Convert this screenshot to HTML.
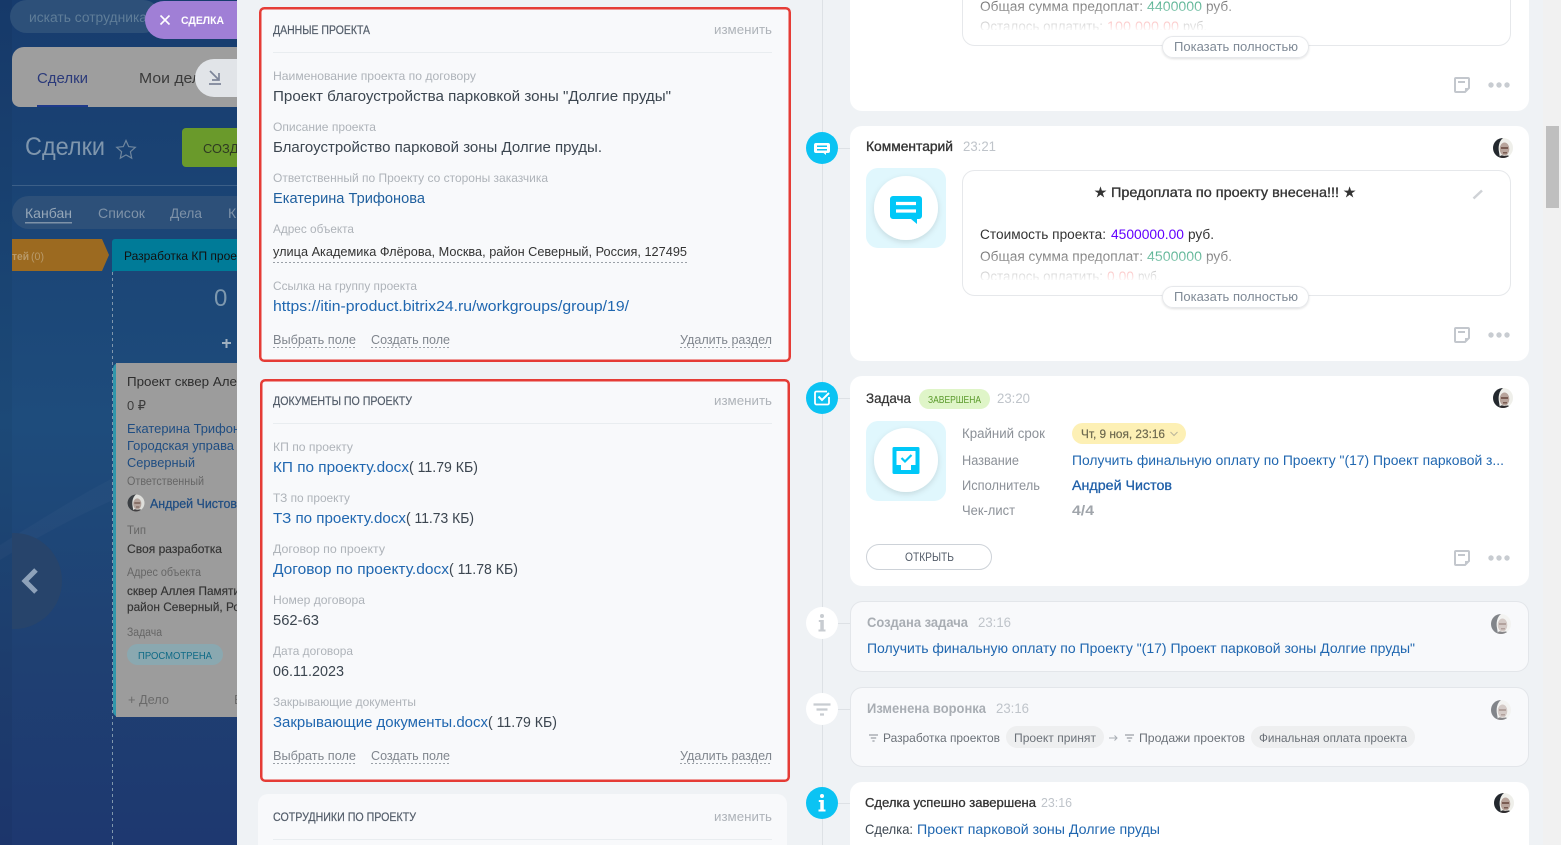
<!DOCTYPE html>
<html lang="ru"><head><meta charset="utf-8"><title>Сделки</title>
<style>
html,body{margin:0;padding:0;width:1561px;height:845px;overflow:hidden;background:#eff2f5}
svg{display:block;position:absolute;left:0;top:0}
text{font-family:"Liberation Sans","DejaVu Sans",sans-serif;white-space:pre;font-size:14px;fill:#3c4650}
.l{font-size:12px;fill:#aeb3b9}
.v{font-size:14.5px;fill:#3c4650}
.a{font-size:14.5px;fill:#2067b0}
.ad{font-size:13px;fill:#333}
.h{font-size:11.5px;fill:#525c69;stroke:#525c69;stroke-width:.2}
.e{font-size:12.5px;fill:#aeb3b9}
.d{font-size:12.5px;fill:#80868e}
.t{font-size:14px;fill:#333;stroke:#333;stroke-width:.35}
.tm{font-size:14px;fill:#bfc4ca}
.g{font-size:13.5px;fill:#8c9198}
.bd{font-size:13.5px;fill:#a8adb3;font-weight:bold}
.c{font-size:13px;fill:#2d2d2d}
.cl{font-size:11.5px;fill:#666}
.cb{font-size:13px;fill:#1f4d82}
.btn{font-size:12.5px;fill:#7f8a96}
</style></head><body>
<svg width="1561" height="845" viewBox="0 0 1561 845" xmlns="http://www.w3.org/2000/svg">
<defs>
<linearGradient id="bg" x1="0" y1="0" x2="0" y2="1"><stop offset="0" stop-color="#173c6e"/><stop offset=".5" stop-color="#1e4c7c"/><stop offset=".78" stop-color="#1f4072"/><stop offset="1" stop-color="#1e3870"/></linearGradient>
<linearGradient id="fB" x1="0" y1="0" x2="0" y2="1"><stop offset="0" stop-color="#fff" stop-opacity="0"/><stop offset="1" stop-color="#fff" stop-opacity="1"/></linearGradient>
<filter id="sh" x="-30%" y="-30%" width="160%" height="160%"><feDropShadow dx="0" dy="2" stdDeviation="3" flood-color="#000" flood-opacity=".12"/></filter>
<filter id="sb" x="-10%" y="-30%" width="120%" height="170%"><feDropShadow dx="0" dy="1" stdDeviation="1" flood-color="#000" flood-opacity=".12"/></filter>
<clipPath id="av"><circle cx="0" cy="0" r="10"/></clipPath>
<clipPath id="cleft"><rect x="12" y="500" width="80" height="160"/></clipPath>
<clipPath id="boxA"><rect x="963" y="0" width="547" height="30"/></clipPath>
<clipPath id="boxB"><rect x="963" y="171" width="547" height="109"/></clipPath>
<g id="avatar" clip-path="url(#av)">
<rect x="-10" y="-10" width="20" height="20" fill="#efefea"/>
<path d="M-10-10H0C-4-7-5-1-4 4L-3 10H-10Z" fill="#23282e"/>
<ellipse cx="1.500" cy="1" rx="4.800" ry="6.500" fill="#b8a49b"/>
<path d="M-4 10C-3 7 -1 7 1 8C3 8 6 6 7 10Z" fill="#2c2a2c"/>
<path d="M-2 -1H5V1H-2ZM0 4H4V5.500H0Z" fill="#7a5c52"/>
</g>
<g id="note">
<path d="M-6-7H6A1 1 0 0 1 7-6V3L3 7H-6A1 1 0 0 1-7 6V-6A1 1 0 0 1-6-7Z" fill="none" stroke="#c3c7cd" stroke-width="2"/>
<path d="M-4-3H3" stroke="#c3c7cd" stroke-width="2"/>
<path d="M7 3H3V7" fill="#c3c7cd"/>
<circle cx="29" cy="0" r="2.700" fill="#c8ccd1"/><circle cx="37" cy="0" r="2.700" fill="#c8ccd1"/><circle cx="45" cy="0" r="2.700" fill="#c8ccd1"/>
</g>
<g id="filt"><path d="M0 0H9M1.800 3H7.200M3.400 6H5.600" stroke="#9aa0a7" stroke-width="1.300" fill="none"/></g>
</defs>

<!-- left background -->
<rect x="0" y="0" width="238" height="845" fill="url(#bg)"/>
<rect x="0" y="0" width="12" height="845" fill="#000" opacity=".04"/>
<path d="M0 545C40 520 80 495 113 478V500C80 515 40 535 0 560Z" fill="#fff" opacity=".025"/>
<circle cx="14" cy="581" r="48" fill="#27446b" clip-path="url(#cleft)"/>
<path d="M36 570L25 581L36 592" fill="none" stroke="#8ea2ba" stroke-width="5"/>

<rect x="10" y="0" width="150" height="33" rx="16.500" fill="#2d5079"/>
<text x="29" y="22" style="font-size:13.500px;fill:#5f7d98" textLength="118" lengthAdjust="spacingAndGlyphs">искать сотрудника</text>
<path d="M157 1H238V39H164A19 19 0 0 1 145 20A19 19 0 0 1 164 1Z" fill="#a07fd6"/>
<path d="M160.500 15.500L169.500 24.500M169.500 15.500L160.500 24.500" stroke="#fff" stroke-width="1.600"/>
<text x="181" y="24" style="font-size:11px;font-weight:bold;fill:#fff" textLength="43" lengthAdjust="spacingAndGlyphs">СДЕЛКА</text>

<path d="M24 47H238V107H20A8 8 0 0 1 12 99V59A12 12 0 0 1 24 47Z" fill="#9e9e9e"/>
<text x="37" y="83" style="font-size:15px;fill:#2b3a7a" textLength="51" lengthAdjust="spacingAndGlyphs">Сделки</text>
<rect x="37" y="105" width="51" height="2" fill="#1f3a8a"/>
<text x="139" y="83" style="font-size:15px;fill:#3a3a3a" textLength="62" lengthAdjust="spacingAndGlyphs">Мои дел</text>
<path d="M214 59H238V97H214A19 19 0 0 1 214 59Z" fill="#e1e4e8"/>
<path d="M210 71L219 80M219 73V80H212M209 84H221" fill="none" stroke="#7d8599" stroke-width="1.700"/>

<text x="25" y="155" style="font-size:25px;fill:#7f96ad" textLength="80" lengthAdjust="spacingAndGlyphs">Сделки</text>
<path d="M126 140.500L128.700 146.600L135.300 147.300L130.400 151.700L131.700 158.200L126 154.900L120.300 158.200L121.600 151.700L116.700 147.300L123.300 146.600Z" fill="none" stroke="#6f869e" stroke-width="1.200"/>
<rect x="182" y="128" width="70" height="39" rx="4" fill="#6a9a2b"/>
<text x="203" y="153" style="font-size:13px;fill:#2f3a22" textLength="44" lengthAdjust="spacingAndGlyphs">СОЗДА</text>
<rect x="12" y="185" width="226" height="1" fill="#3c5f87"/>
<rect x="12" y="196" width="260" height="33" rx="16.500" fill="#2d5079"/>
<text x="25" y="218" style="font-size:14px;fill:#96a7b8" textLength="47" lengthAdjust="spacingAndGlyphs">Канбан</text>
<rect x="25" y="222" width="47" height="1.500" fill="#7e92a8"/>
<text x="98" y="218" style="font-size:14px;fill:#7e92a8" textLength="47" lengthAdjust="spacingAndGlyphs">Список</text>
<text x="170" y="218" style="font-size:14px;fill:#7e92a8" textLength="32" lengthAdjust="spacingAndGlyphs">Дела</text>
<text x="228" y="218" style="font-size:14px;fill:#7e92a8">К</text>

<path d="M12 239H102L109 255L102 271H12Z" fill="#9c6a20"/>
<text x="12" y="260" style="font-size:11px;font-weight:bold;fill:#b89a6a" textLength="17" lengthAdjust="spacingAndGlyphs">тей</text>
<text x="31" y="260" style="font-size:11px;fill:#b89a6a" textLength="13" lengthAdjust="spacingAndGlyphs">(0)</text>
<path d="M112 242A3 3 0 0 1 115 239H245V271H115A3 3 0 0 0 112 274Z" fill="#007b98"/>
<text x="124" y="260" style="font-size:12px;fill:#111" textLength="113" lengthAdjust="spacingAndGlyphs">Разработка КП прое</text>
<path d="M112.500 272V845" stroke="#7f97ad" stroke-width="1" stroke-dasharray="3 3"/>
<text x="214" y="306" style="font-size:24px;fill:#7d98ae">0</text>
<path d="M222 343H231M226.500 339V348" stroke="#9fb0c0" stroke-width="2"/>

<rect x="113" y="363" width="140" height="354" rx="6" fill="#2f96ab"/>
<path d="M116 363H253V717H116Z" fill="#9c9c9c"/>
<text x="127" y="386" class="c" textLength="110" lengthAdjust="spacingAndGlyphs">Проект сквер Але</text>
<text x="127" y="410" style="font-size:13px;fill:#3d3d3d" textLength="19" lengthAdjust="spacingAndGlyphs">0 ₽</text>
<text x="127" y="433" class="cb" textLength="113" lengthAdjust="spacingAndGlyphs">Екатерина Трифон</text>
<text x="127" y="450" class="cb" textLength="107" lengthAdjust="spacingAndGlyphs">Городская управа</text>
<text x="127" y="467" class="cb" textLength="68" lengthAdjust="spacingAndGlyphs">Серверный</text>
<text x="127" y="485" class="cl" textLength="77" lengthAdjust="spacingAndGlyphs">Ответственный</text>
<use href="#avatar" transform="translate(136,503) scale(.85)" opacity=".8"/>
<text x="150" y="508" style="font-size:12.500px;fill:#1f4d82;stroke:#1f4d82;stroke-width:.25" textLength="87" lengthAdjust="spacingAndGlyphs">Андрей Чистов</text>
<text x="127" y="534" class="cl" textLength="19" lengthAdjust="spacingAndGlyphs">Тип</text>
<text x="127" y="553" style="font-size:12px;fill:#333;stroke:#333;stroke-width:.15" textLength="95" lengthAdjust="spacingAndGlyphs">Своя разработка</text>
<text x="127" y="576" class="cl" textLength="74" lengthAdjust="spacingAndGlyphs">Адрес объекта</text>
<text x="127" y="595" style="font-size:12px;fill:#333;stroke:#333;stroke-width:.15" textLength="113" lengthAdjust="spacingAndGlyphs">сквер Аллея Памяти</text>
<text x="127" y="611" style="font-size:12px;fill:#333;stroke:#333;stroke-width:.15" textLength="113" lengthAdjust="spacingAndGlyphs">район Северный, Ро</text>
<text x="127" y="636" class="cl" textLength="35" lengthAdjust="spacingAndGlyphs">Задача</text>
<rect x="127" y="644" width="96" height="21" rx="10.500" fill="#8aa8b0"/>
<text x="138" y="659" style="font-size:10.500px;fill:#0f6a86" textLength="74" lengthAdjust="spacingAndGlyphs">ПРОСМОТРЕНА</text>
<text x="128" y="704" style="font-size:13px;fill:#6a6a6a" textLength="41" lengthAdjust="spacingAndGlyphs">+ Дело</text>
<text x="234" y="704" style="font-size:13px;fill:#6a6a6a">В</text>

<!-- slider bg -->
<rect x="237" y="0" width="1306" height="845" fill="#eff2f5"/>
<rect x="1543" y="0" width="18" height="845" fill="#f1f1f1"/>
<rect x="1546" y="126" width="13" height="82" fill="#bfbfbf"/>

<!-- card 1 -->
<rect x="260.250" y="8.250" width="529.500" height="352.500" rx="4" fill="#f8f9fb" stroke="#e53c36" stroke-width="2.500"/>
<text x="273" y="34" class="h" textLength="97" lengthAdjust="spacingAndGlyphs">ДАННЫЕ ПРОЕКТА</text>
<text x="714" y="34" class="e" textLength="58" lengthAdjust="spacingAndGlyphs">изменить</text>
<rect x="273" y="52" width="499" height="1" fill="#e9edf0"/>
<text x="273" y="80" class="l" textLength="203" lengthAdjust="spacingAndGlyphs">Наименование проекта по договору</text>
<text x="273" y="101" class="v" textLength="398" lengthAdjust="spacingAndGlyphs">Проект благоустройства парковкой зоны "Долгие пруды"</text>
<text x="273" y="131" class="l" textLength="103" lengthAdjust="spacingAndGlyphs">Описание проекта</text>
<text x="273" y="152" class="v" textLength="329" lengthAdjust="spacingAndGlyphs">Благоустройство парковой зоны Долгие пруды.</text>
<text x="273" y="182" class="l" textLength="275" lengthAdjust="spacingAndGlyphs">Ответственный по Проекту со стороны заказчика</text>
<text x="273" y="203" class="a" style="fill:#1f5f9e" textLength="152" lengthAdjust="spacingAndGlyphs">Екатерина Трифонова</text>
<text x="273" y="233" class="l" textLength="81" lengthAdjust="spacingAndGlyphs">Адрес объекта</text>
<text x="273" y="256" class="ad" textLength="414" lengthAdjust="spacingAndGlyphs">улица Академика Флёрова, Москва, район Северный, Россия, 127495</text>
<path d="M273 262.500H687" stroke="#9aa0a7" stroke-dasharray="2 2"/>
<text x="273" y="290" class="l" textLength="144" lengthAdjust="spacingAndGlyphs">Ссылка на группу проекта</text>
<text x="273" y="311" class="a" textLength="356" lengthAdjust="spacingAndGlyphs">https://itin-product.bitrix24.ru/workgroups/group/19/</text>
<text x="273" y="344" class="d" textLength="83" lengthAdjust="spacingAndGlyphs">Выбрать поле</text>
<text x="371" y="344" class="d" textLength="79" lengthAdjust="spacingAndGlyphs">Создать поле</text>
<text x="680" y="344" class="d" textLength="92" lengthAdjust="spacingAndGlyphs">Удалить раздел</text>
<path d="M273 347.500H356M371 347.500H450M680 347.500H772" stroke="#9aa0a7" stroke-dasharray="2 2"/>

<!-- card 2 -->
<rect x="261.250" y="380.250" width="527.500" height="400.500" rx="4" fill="#f8f9fb" stroke="#e53c36" stroke-width="2.500"/>
<text x="273" y="405" class="h" textLength="139" lengthAdjust="spacingAndGlyphs">ДОКУМЕНТЫ ПО ПРОЕКТУ</text>
<text x="714" y="405" class="e" textLength="58" lengthAdjust="spacingAndGlyphs">изменить</text>
<rect x="273" y="423" width="499" height="1" fill="#e9edf0"/>
<text x="273" y="451" class="l" textLength="80" lengthAdjust="spacingAndGlyphs">КП по проекту</text>
<text x="273" y="472" class="a" textLength="136" lengthAdjust="spacingAndGlyphs">КП по проекту.docx</text>
<text x="409" y="472" class="v" textLength="69" lengthAdjust="spacingAndGlyphs">( 11.79 КБ)</text>
<text x="273" y="502" class="l" textLength="77" lengthAdjust="spacingAndGlyphs">ТЗ по проекту</text>
<text x="273" y="523" class="a" textLength="133" lengthAdjust="spacingAndGlyphs">ТЗ по проекту.docx</text>
<text x="406" y="523" class="v" textLength="68" lengthAdjust="spacingAndGlyphs">( 11.73 КБ)</text>
<text x="273" y="553" class="l" textLength="112" lengthAdjust="spacingAndGlyphs">Договор по проекту</text>
<text x="273" y="574" class="a" textLength="176" lengthAdjust="spacingAndGlyphs">Договор по проекту.docx</text>
<text x="449" y="574" class="v" textLength="69" lengthAdjust="spacingAndGlyphs">( 11.78 КБ)</text>
<text x="273" y="604" class="l" textLength="92" lengthAdjust="spacingAndGlyphs">Номер договора</text>
<text x="273" y="625" class="v" textLength="46" lengthAdjust="spacingAndGlyphs">562-63</text>
<text x="273" y="655" class="l" textLength="80" lengthAdjust="spacingAndGlyphs">Дата договора</text>
<text x="273" y="676" class="v" textLength="71" lengthAdjust="spacingAndGlyphs">06.11.2023</text>
<text x="273" y="706" class="l" textLength="143" lengthAdjust="spacingAndGlyphs">Закрывающие документы</text>
<text x="273" y="727" class="a" textLength="215" lengthAdjust="spacingAndGlyphs">Закрывающие документы.docx</text>
<text x="488" y="727" class="v" textLength="69" lengthAdjust="spacingAndGlyphs">( 11.79 КБ)</text>
<text x="273" y="760" class="d" textLength="83" lengthAdjust="spacingAndGlyphs">Выбрать поле</text>
<text x="371" y="760" class="d" textLength="79" lengthAdjust="spacingAndGlyphs">Создать поле</text>
<text x="680" y="760" class="d" textLength="92" lengthAdjust="spacingAndGlyphs">Удалить раздел</text>
<path d="M273 763.500H356M371 763.500H450M680 763.500H772" stroke="#9aa0a7" stroke-dasharray="2 2"/>

<!-- card 3 -->
<rect x="258" y="794" width="529" height="70" rx="10" fill="#f8f9fb"/>
<text x="273" y="821" class="h" textLength="143" lengthAdjust="spacingAndGlyphs">СОТРУДНИКИ ПО ПРОЕКТУ</text>
<text x="714" y="821" class="e" textLength="58" lengthAdjust="spacingAndGlyphs">изменить</text>
<rect x="273" y="839" width="499" height="1" fill="#e9edf0"/>

<!-- timeline -->
<rect x="822" y="0" width="1" height="845" fill="#dde1e5"/>
<path d="M838 148.500H850M838 398.500H850M838 623.500H850M838 709.500H850M838 803.500H850" stroke="#dde1e5"/>

<!-- card A -->
<path d="M850-20H1529V99A12 12 0 0 1 1517 111H862A12 12 0 0 1 850 99Z" fill="#fff"/>
<rect x="962.500" y="-30" width="548" height="75.500" rx="12" fill="#fff" stroke="#e6e8eb"/>
<g clip-path="url(#boxA)">
<text x="980" y="11" class="g" style="fill:#333" textLength="163" lengthAdjust="spacingAndGlyphs">Общая сумма предоплат:</text>
<text x="1147" y="11" class="g" style="fill:#0a8f60" textLength="55" lengthAdjust="spacingAndGlyphs">4400000</text>
<text x="1206" y="11" class="g" style="fill:#333" textLength="26" lengthAdjust="spacingAndGlyphs">руб.</text>
<text x="980" y="31" class="g" style="fill:#333" textLength="123" lengthAdjust="spacingAndGlyphs">Осталось оплатить:</text>
<text x="1107" y="31" class="g" style="fill:#f01010" textLength="72" lengthAdjust="spacingAndGlyphs">100 000.00</text>
<text x="1183" y="31" class="g" style="fill:#333" textLength="24" lengthAdjust="spacingAndGlyphs">руб.</text>
<rect x="963" y="-12" width="547" height="44" fill="url(#fB)"/>
</g>
<rect x="1162.500" y="36.500" width="146" height="21" rx="10.500" fill="#fff" stroke="#e6e8eb" filter="url(#sb)"/>
<text x="1174" y="51" class="btn" textLength="124" lengthAdjust="spacingAndGlyphs">Показать полностью</text>
<use href="#note" x="1462" y="85"/>

<!-- card B -->
<rect x="850" y="126" width="679" height="235" rx="12" fill="#fff"/>
<circle cx="822" cy="148" r="16" fill="#0bc3f3"/>
<path d="M816 143H828A2 2 0 0 1 830 145V151A2 2 0 0 1 828 153H826V155L823.500 153H816A2 2 0 0 1 814 151V145A2 2 0 0 1 816 143Z" fill="#fff"/>
<path d="M817 146.300H827M817 149.800H827" stroke="#0bc3f3" stroke-width="1.500"/>
<text x="866" y="151" class="t" textLength="87" lengthAdjust="spacingAndGlyphs">Комментарий</text>
<text x="963" y="151" class="tm" textLength="33" lengthAdjust="spacingAndGlyphs">23:21</text>
<use href="#avatar" x="1503" y="148"/>
<rect x="866" y="168" width="80" height="80" rx="12" fill="#e0f7fd"/>
<circle cx="906" cy="208" r="32" fill="#fff" filter="url(#sh)"/>
<path d="M893 196H919A3 3 0 0 1 922 199V216A3 3 0 0 1 919 219H917V224L911 219H893A3 3 0 0 1 890 216V199A3 3 0 0 1 893 196Z" fill="#00c8f8"/>
<path d="M896 203.500H916M896 211H916" stroke="#fff" stroke-width="3.200"/>
<rect x="962.500" y="170.500" width="548" height="125" rx="12" fill="#fff" stroke="#e6e8eb"/>
<text x="1094" y="197" style="font-size:14px;fill:#333;stroke:#333;stroke-width:.3" textLength="262" lengthAdjust="spacingAndGlyphs">★ Предоплата по проекту внесена!!! ★</text>
<path d="M1473.500 198.500L1482 190.500" stroke="#cfd2d6" stroke-width="2.500"/>
<g clip-path="url(#boxB)">
<text x="980" y="239" class="g" style="fill:#333" textLength="126" lengthAdjust="spacingAndGlyphs">Стоимость проекта:</text>
<text x="1111" y="239" class="g" style="fill:#6200ff" textLength="73" lengthAdjust="spacingAndGlyphs">4500000.00</text>
<text x="1188" y="239" class="g" style="fill:#333" textLength="26" lengthAdjust="spacingAndGlyphs">руб.</text>
<text x="980" y="261" class="g" style="fill:#333" textLength="163" lengthAdjust="spacingAndGlyphs">Общая сумма предоплат:</text>
<text x="1147" y="261" class="g" style="fill:#0a8f60" textLength="55" lengthAdjust="spacingAndGlyphs">4500000</text>
<text x="1206" y="261" class="g" style="fill:#333" textLength="26" lengthAdjust="spacingAndGlyphs">руб.</text>
<text x="980" y="281" class="g" style="fill:#333" textLength="123" lengthAdjust="spacingAndGlyphs">Осталось оплатить:</text>
<text x="1107" y="281" class="g" style="fill:#f01010" textLength="27" lengthAdjust="spacingAndGlyphs">0.00</text>
<text x="1138" y="281" class="g" style="fill:#333" textLength="22" lengthAdjust="spacingAndGlyphs">руб.</text>
<rect x="963" y="238" width="547" height="44" fill="url(#fB)"/>
</g>
<rect x="1162.500" y="286.500" width="146" height="21" rx="10.500" fill="#fff" stroke="#e6e8eb" filter="url(#sb)"/>
<text x="1174" y="301" class="btn" textLength="124" lengthAdjust="spacingAndGlyphs">Показать полностью</text>
<use href="#note" x="1462" y="335"/>

<!-- card C -->
<rect x="850" y="376" width="679" height="210" rx="12" fill="#fff"/>
<circle cx="822" cy="398" r="16" fill="#0bc3f3"/>
<path d="M827 391.500H816.500A1.500 1.500 0 0 0 815 393V403A1.500 1.500 0 0 0 816.500 404.500H827.500A1.500 1.500 0 0 0 829 403V397" fill="none" stroke="#fff" stroke-width="1.800"/>
<path d="M818.500 396.500L822 400L829 393" fill="none" stroke="#fff" stroke-width="2"/>
<text x="866" y="403" class="t" style="stroke-width:.2" textLength="45" lengthAdjust="spacingAndGlyphs">Задача</text>
<rect x="919" y="389" width="71" height="20" rx="10" fill="#dff5c8"/>
<text x="928" y="403" style="font-size:10.500px;fill:#5a9a2b" textLength="53" lengthAdjust="spacingAndGlyphs">ЗАВЕРШЕНА</text>
<text x="997" y="403" class="tm" textLength="33" lengthAdjust="spacingAndGlyphs">23:20</text>
<use href="#avatar" x="1503" y="398"/>
<rect x="866" y="421" width="80" height="80" rx="12" fill="#e0f7fd"/>
<circle cx="906" cy="460" r="32" fill="#fff" filter="url(#sh)"/>
<rect x="892.500" y="447" width="27" height="27" rx="1.500" fill="#00c8f8"/>
<path d="M896.500 451H915.500V465H911V470H901V465H896.500Z" fill="#fff"/>
<path d="M901.500 458L905 461.500L911.500 455" fill="none" stroke="#00c8f8" stroke-width="2.200"/>
<text x="962" y="438" class="g" textLength="83" lengthAdjust="spacingAndGlyphs">Крайний срок</text>
<rect x="1072" y="423" width="114" height="21" rx="10.500" fill="#fdf0b5"/>
<text x="1081" y="438" style="font-size:12px;fill:#6e6a50;stroke:#6e6a50;stroke-width:.2" textLength="84" lengthAdjust="spacingAndGlyphs">Чт, 9 ноя, 23:16</text>
<path d="M1170.500 432L1174 435.500L1177.500 432" fill="none" stroke="#b8b49a"/>
<text x="962" y="465" class="g" textLength="57" lengthAdjust="spacingAndGlyphs">Название</text>
<text x="1072" y="465" style="font-size:13.500px;fill:#2067b0" textLength="432" lengthAdjust="spacingAndGlyphs">Получить финальную оплату по Проекту "(17) Проект парковой з...</text>
<text x="962" y="490" class="g" textLength="78" lengthAdjust="spacingAndGlyphs">Исполнитель</text>
<text x="1072" y="490" style="font-size:13.500px;fill:#1f5fa8;stroke:#1f5fa8;stroke-width:.3" textLength="100" lengthAdjust="spacingAndGlyphs">Андрей Чистов</text>
<text x="962" y="515" class="g" textLength="53" lengthAdjust="spacingAndGlyphs">Чек-лист</text>
<text x="1072" y="515" style="font-size:13.500px;font-weight:bold;fill:#a0a5ab" textLength="22" lengthAdjust="spacingAndGlyphs">4/4</text>
<rect x="866.500" y="544.500" width="125" height="25" rx="12.500" fill="#fff" stroke="#cdd2d8"/>
<text x="905" y="561" style="font-size:11.500px;fill:#535c69" textLength="49" lengthAdjust="spacingAndGlyphs">ОТКРЫТЬ</text>
<use href="#note" x="1462" y="558"/>

<!-- card D -->
<rect x="850.500" y="601.500" width="678" height="70" rx="12" fill="#f8f9fb" stroke="#e3e6ea"/>
<circle cx="822" cy="623" r="16" fill="#fff"/>
<path d="M818.800 620H823.800V629.500H825.500V631.500H818.500V629.500H820.300V622H818.800Z" fill="#c8ccd1"/>
<circle cx="822" cy="616" r="2" fill="#c8ccd1"/>
<text x="867" y="627" class="bd" textLength="101" lengthAdjust="spacingAndGlyphs">Создана задача</text>
<text x="978" y="627" class="tm" textLength="33" lengthAdjust="spacingAndGlyphs">23:16</text>
<use href="#avatar" x="1501" y="624" opacity=".55"/>
<text x="867" y="653" style="font-size:14px;fill:#2067b0" textLength="548" lengthAdjust="spacingAndGlyphs">Получить финальную оплату по Проекту "(17) Проект парковой зоны Долгие пруды"</text>

<!-- card E -->
<rect x="850.500" y="687.500" width="678" height="79" rx="12" fill="#f8f9fb" stroke="#e3e6ea"/>
<circle cx="822" cy="709" r="16" fill="#fff"/>
<path d="M813.500 704.500H830.500M816.500 709.500H827.500M820 714.500H824" stroke="#c8ccd1" stroke-width="2.200"/>
<text x="867" y="713" class="bd" textLength="119" lengthAdjust="spacingAndGlyphs">Изменена воронка</text>
<text x="996" y="713" class="tm" textLength="33" lengthAdjust="spacingAndGlyphs">23:16</text>
<use href="#avatar" x="1501" y="710" opacity=".55"/>
<use href="#filt" x="869" y="735"/>
<text x="883" y="742" style="font-size:12px;fill:#6b7178" textLength="117" lengthAdjust="spacingAndGlyphs">Разработка проектов</text>
<rect x="1006" y="726" width="98" height="22" rx="11" fill="#eeeff0"/>
<text x="1014" y="742" style="font-size:12px;fill:#6b7178" textLength="82" lengthAdjust="spacingAndGlyphs">Проект принят</text>
<path d="M1109 738H1117M1114.500 735.500L1117 738L1114.500 740.500" fill="none" stroke="#a8adb3"/>
<use href="#filt" x="1125" y="735"/>
<text x="1139" y="742" style="font-size:12px;fill:#6b7178" textLength="106" lengthAdjust="spacingAndGlyphs">Продажи проектов</text>
<rect x="1251" y="726" width="164" height="22" rx="11" fill="#eeeff0"/>
<text x="1259" y="742" style="font-size:12px;fill:#6b7178" textLength="148" lengthAdjust="spacingAndGlyphs">Финальная оплата проекта</text>

<!-- card F -->
<rect x="850" y="782" width="679" height="90" rx="12" fill="#fff"/>
<circle cx="822" cy="803" r="16" fill="#0bc3f3"/>
<path d="M818.800 800H823.800V809.500H825.500V811.500H818.500V809.500H820.300V802H818.800Z" fill="#fff"/>
<circle cx="822" cy="796" r="2" fill="#fff"/>
<text x="865" y="807" style="font-size:13px;fill:#333;stroke:#333;stroke-width:.3" textLength="171" lengthAdjust="spacingAndGlyphs">Сделка успешно завершена</text>
<text x="1041" y="807" style="font-size:13px;fill:#bfc4ca" textLength="31" lengthAdjust="spacingAndGlyphs">23:16</text>
<use href="#avatar" x="1504" y="803"/>
<text x="865" y="834" style="font-size:14px;fill:#3c4650" textLength="48" lengthAdjust="spacingAndGlyphs">Сделка:</text>
<text x="917" y="834" style="font-size:14px;fill:#2067b0" textLength="243" lengthAdjust="spacingAndGlyphs">Проект парковой зоны Долгие пруды</text>
</svg>
</body></html>
